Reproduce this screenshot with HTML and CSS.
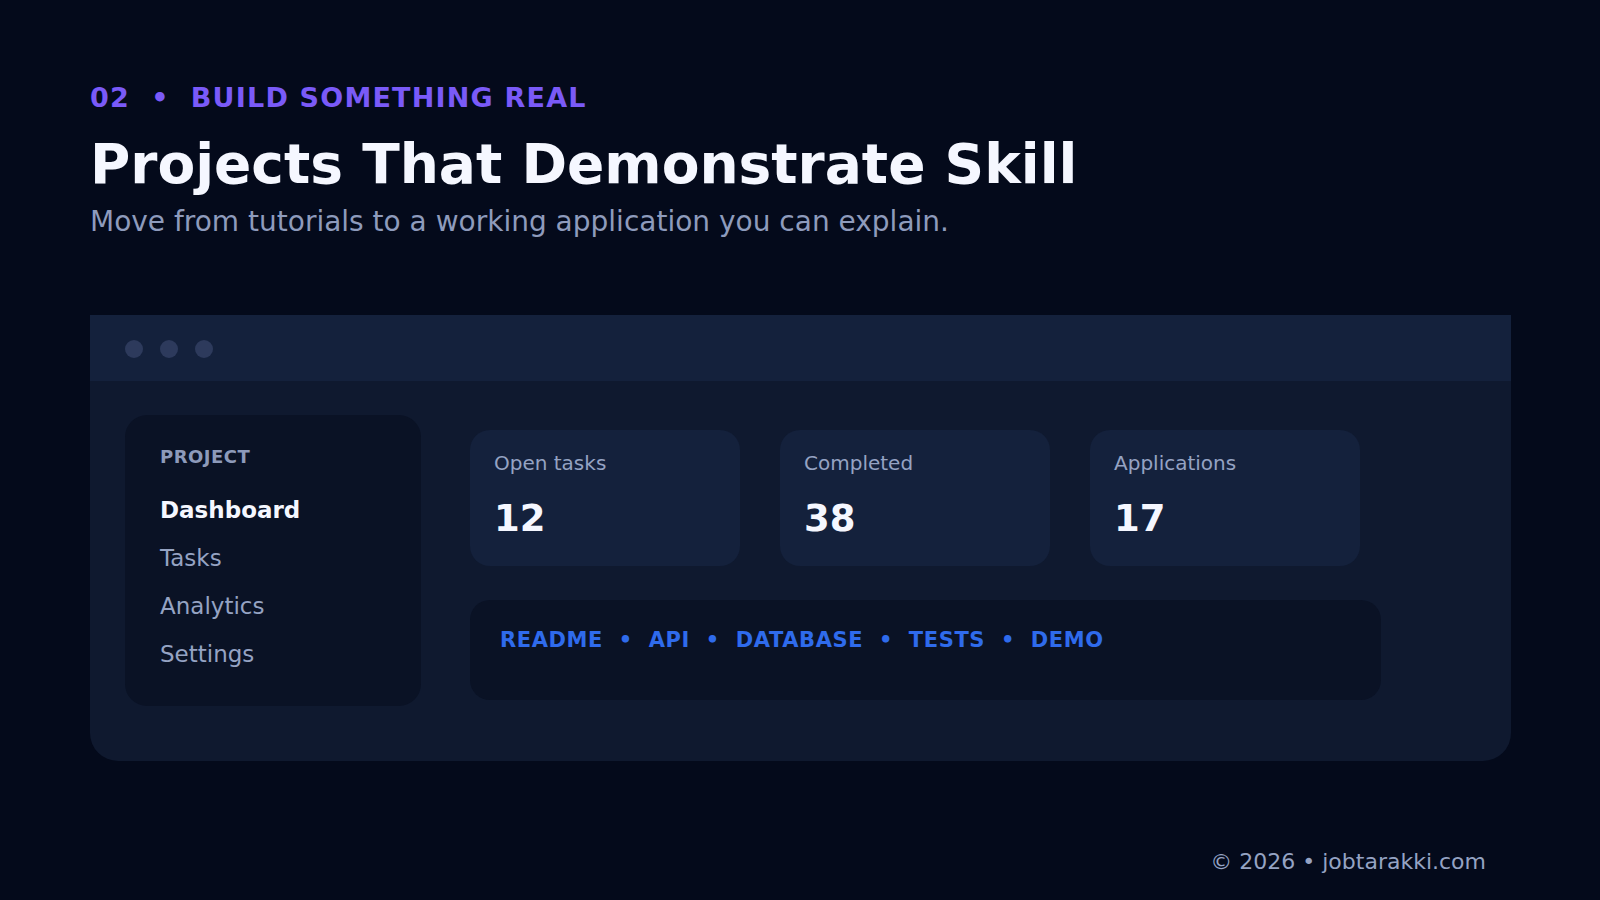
FILE: index.html
```html
<!DOCTYPE html>
<html>
<head>
    <meta charset="utf-8">
    <meta name="viewport" content="width=device-width, initial-scale=1.0">
    <title>Projects That Demonstrate Skill</title>
    <link rel="stylesheet" href="styles.css">
</head>
<body>
    <div class="slide">
        <header class="intro">
            <div class="eyebrow">02&nbsp;&nbsp;•&nbsp;&nbsp;BUILD SOMETHING REAL</div>
            <h1 class="title">Projects That Demonstrate Skill</h1>
            <p class="lead">Move from tutorials to a working application you can explain.</p>
        </header>

        <!-- fake app window -->
        <div class="window">
            <div class="titlebar">
                <span class="dot"></span>
                <span class="dot"></span>
                <span class="dot"></span>
            </div>
            <div class="window-body">
                <aside class="sidebar">
                    <div class="sidebar-label">PROJECT</div>
                    <ul class="nav">
                        <li class="active">Dashboard</li>
                        <li>Tasks</li>
                        <li>Analytics</li>
                        <li>Settings</li>
                    </ul>
                </aside>

                <div class="main">
                    <div class="stats">
                        <div class="stat">
                            <div class="stat-label">Open tasks</div>
                            <div class="stat-value">12</div>
                        </div>
                        <div class="stat">
                            <div class="stat-label">Completed</div>
                            <div class="stat-value">38</div>
                        </div>
                        <div class="stat">
                            <div class="stat-label">Applications</div>
                            <div class="stat-value">17</div>
                        </div>
                    </div>
                    <div class="stack">README&nbsp;&nbsp;•&nbsp;&nbsp;API&nbsp;&nbsp;•&nbsp;&nbsp;DATABASE&nbsp;&nbsp;•&nbsp;&nbsp;TESTS&nbsp;&nbsp;•&nbsp;&nbsp;DEMO</div>
                </div>
            </div>
        </div>

        <footer class="footer">© 2026 • jobtarakki.com</footer>
    </div>
</body>
</html>
```

FILE: styles.css
```css
* {
    box-sizing: border-box;
}

body {
    margin: 0;
    background: #040a1b;
    font-family: 'DejaVu Sans', 'Noto Sans', sans-serif;
    color: #f5f7ff;
}

.slide {
    width: 1600px;
    height: 900px;
    padding: 82px 89px 0 90px;
    display: flex;
    flex-direction: column;
}

/* heading block */
.eyebrow {
    font-size: 27px;
    line-height: 32px;
    font-weight: bold;
    letter-spacing: 1.2px;
    color: #7a5af8;
}

.title {
    margin: 18px 0 0;
    font-size: 55px;
    line-height: 64px;
    font-weight: bold;
    color: #f5f7ff;
}

.lead {
    margin: 10px 0 0;
    font-size: 28px;
    line-height: 32px;
    color: #8e9bbc;
}

/* window mockup */
.window {
    margin-top: 77px;
    width: 1421px;
    height: 446px;
    background: #0f192f;
    border-radius: 0 0 28px 28px;
    overflow: hidden;
}

.titlebar {
    height: 66px;
    background: #14213c;
    display: flex;
    align-items: center;
    gap: 17px;
    padding: 1px 0 0 35px;
}

.dot {
    width: 18px;
    height: 18px;
    border-radius: 50%;
    background: #2d3a5c;
}

.window-body {
    display: flex;
    align-items: flex-start;
    gap: 49px;
    padding: 34px 35px;
}

.sidebar {
    width: 296px;
    height: 291px;
    background: #0a1225;
    border-radius: 22px;
    padding: 32px 0 0 35px;
}

.sidebar-label {
    font-size: 18px;
    line-height: 20px;
    font-weight: bold;
    letter-spacing: 0.5px;
    color: #8d9aba;
}

.nav {
    list-style: none;
    margin: 19px 0 0;
    padding: 0;
}

.nav li {
    font-size: 23px;
    line-height: 48px;
    color: #95a3c3;
}

.nav li.active {
    font-weight: bold;
    color: #f5f7ff;
}

.main {
    margin-top: 15px;
}

.stats {
    display: flex;
    gap: 40px;
}

.stat {
    width: 270px;
    height: 136px;
    background: #14213c;
    border-radius: 20px;
    padding: 21px 24px;
}

.stat-label {
    font-size: 20px;
    line-height: 24px;
    color: #95a3c3;
}

.stat-value {
    margin-top: 22px;
    font-size: 37px;
    line-height: 44px;
    font-weight: bold;
    color: #f5f7ff;
}

.stack {
    margin-top: 34px;
    width: 911px;
    height: 100px;
    background: #0a1225;
    border-radius: 20px;
    padding: 28px 30px;
    font-size: 21px;
    line-height: 24px;
    font-weight: bold;
    letter-spacing: 0.6px;
    color: #2f6bec;
}

.footer {
    margin-top: 88px;
    align-self: flex-end;
    padding-right: 25px;
    font-size: 22px;
    line-height: 26px;
    color: #95a3c3;
}
```
